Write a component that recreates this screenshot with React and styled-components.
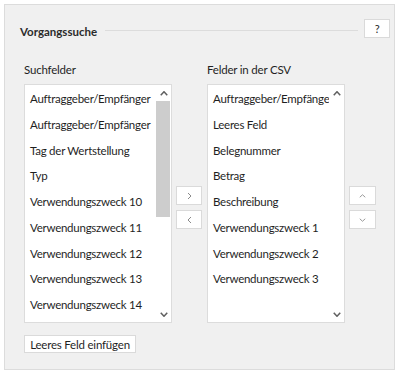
import React from "react";
import styled, { createGlobalStyle } from "styled-components";

const Global = createGlobalStyle`
  html, body { margin: 0; padding: 0; background: #ffffff; }
  body { font-family: Lato, "Noto Sans", "DejaVu Sans", sans-serif; color: #1f1f1f; }
  * { box-sizing: border-box; }
`;

const Panel = styled.div`
  margin: 4px 0 0 4px;
  width: 391px;
  height: 366px;
  border: 1px solid #dcdcdc;
  background: #f0f0f0;
  padding: 14px 4px 0 15px;
  display: flex;
  flex-direction: column;
`;

const Header = styled.div`
  display: flex;
  align-items: center;
  height: 19px;
`;

const Title = styled.div`
  font-size: 11.5px;
  font-weight: 700;
  line-height: 16px;
  color: #2b2b2b;
  margin-right: 8px;
  margin-top: 7px;
`;

const Rule = styled.div`
  flex: 1;
  height: 1px;
  background: #dcdcdc;
  margin-right: 6px;
  margin-top: 3px;
`;

const Button = styled.button`
  font-family: inherit;
  background: #ffffff;
  border: 1px solid #dadada;
  border-radius: 0;
  padding: 0;
  margin: 0;
  width: ${(p) => p.$w}px;
  height: ${(p) => p.$h}px;
  font-size: ${(p) => p.$fs || 11.5}px;
  letter-spacing: -0.2px;
  color: ${(p) => p.$color || "#1f1f1f"};
  white-space: nowrap;
  display: flex;
  align-items: center;
  justify-content: center;
`;

const Body = styled.div`
  display: grid;
  grid-template-columns: 148px 35px 138px auto;
  grid-template-rows: 25px 239px;
  margin-top: 21px;
  padding-left: 4px;
`;

const Label = styled.div`
  font-size: 11.5px;
  letter-spacing: -0.2px;
  color: #1f1f1f;
  line-height: 16px;
  margin-top: 3px;
  align-self: start;
`;

const ListBox = styled.div`
  border: 1px solid #dcdcdc;
  background: #ffffff;
  display: flex;
  overflow: hidden;
`;

const Items = styled.div`
  flex: 1;
  overflow: hidden;
  padding-left: 5px;
  padding-top: 1px;
`;

const Item = styled.div`
  height: 25.75px;
  line-height: 25.75px;
  font-size: 11.5px;
  letter-spacing: -0.25px;
  white-space: nowrap;
  color: #1f1f1f;
`;

const Scrollbar = styled.div`
  width: 15px;
  display: flex;
  flex-direction: column;
  background: #ffffff;
`;

const ArrowCell = styled.div`
  height: 16px;
  display: flex;
  align-items: center;
  justify-content: center;
`;

const Track = styled.div`
  flex: 1;
  position: relative;
`;

const Thumb = styled.div`
  position: absolute;
  left: 0;
  right: 1px;
  top: 0;
  height: ${(p) => p.$h}px;
  background: #cdcdcd;
`;

const ButtonCol = styled.div`
  display: flex;
  flex-direction: column;
  gap: 5px;
  padding-top: 102px;
  padding-left: ${(p) => p.$pl}px;
`;

const Footer = styled.div`
  margin-top: 12px;
  padding-left: 4px;
`;

const Chevron = ({ dir, color = "#606060", w = 8, h = 5, sw = 1.5 }) => {
  const pts = {
    up: `0.75,${h - 0.75} ${w / 2},0.75 ${w - 0.75},${h - 0.75}`,
    down: `0.75,0.75 ${w / 2},${h - 0.75} ${w - 0.75},0.75`,
  };
  return (
    <svg width={w} height={h} viewBox={`0 0 ${w} ${h}`}>
      <polyline points={pts[dir]} fill="none" stroke={color} strokeWidth={sw} />
    </svg>
  );
};

const SideChevron = ({ dir }) => {
  const pts = dir === "right" ? "1,1 4,4 1,7" : "4,1 1,4 4,7";
  return (
    <svg width="5" height="8" viewBox="0 0 5 8">
      <polyline points={pts} fill="none" stroke="#8a8a8a" strokeWidth="1" />
    </svg>
  );
};

const leftItems = [
  "Auftraggeber/Empfänger",
  "Auftraggeber/Empfänger",
  "Tag der Wertstellung",
  "Typ",
  "Verwendungszweck 10",
  "Verwendungszweck 11",
  "Verwendungszweck 12",
  "Verwendungszweck 13",
  "Verwendungszweck 14",
];

const rightItems = [
  "Auftraggeber/Empfänger",
  "Leeres Feld",
  "Belegnummer",
  "Betrag",
  "Beschreibung",
  "Verwendungszweck 1",
  "Verwendungszweck 2",
  "Verwendungszweck 3",
];

const List = ({ items, thumb }) => (
  <ListBox>
    <Items>
      {items.map((t, i) => (
        <Item key={i}>{t}</Item>
      ))}
    </Items>
    <Scrollbar>
      <ArrowCell>
        <Chevron dir="up" />
      </ArrowCell>
      <Track>{thumb ? <Thumb $h={thumb} /> : null}</Track>
      <ArrowCell>
        <Chevron dir="down" />
      </ArrowCell>
    </Scrollbar>
  </ListBox>
);

export default function App() {
  return (
    <>
      <Global />
      <Panel>
        <Header>
          <Title>Vorgangssuche</Title>
          <Rule />
          <Button $w={26} $h={19} $fs={11}>?</Button>
        </Header>
        <Body>
          <Label>Suchfelder</Label>
          <div />
          <Label>Felder in der CSV</Label>
          <div />
          <List items={leftItems} thumb={116} />
          <ButtonCol $pl={4}>
            <Button $w={26} $h={19}><SideChevron dir="right" /></Button>
            <Button $w={26} $h={19}><SideChevron dir="left" /></Button>
          </ButtonCol>
          <List items={rightItems} />
          <ButtonCol $pl={4}>
            <Button $w={27} $h={19}><Chevron dir="up" color="#9a9a9a" w={7} h={4} sw={1} /></Button>
            <Button $w={27} $h={19}><Chevron dir="down" color="#9a9a9a" w={7} h={4} sw={1} /></Button>
          </ButtonCol>
        </Body>
        <Footer>
          <Button $w={112} $h={18}>Leeres Feld einfügen</Button>
        </Footer>
      </Panel>
    </>
  );
}
